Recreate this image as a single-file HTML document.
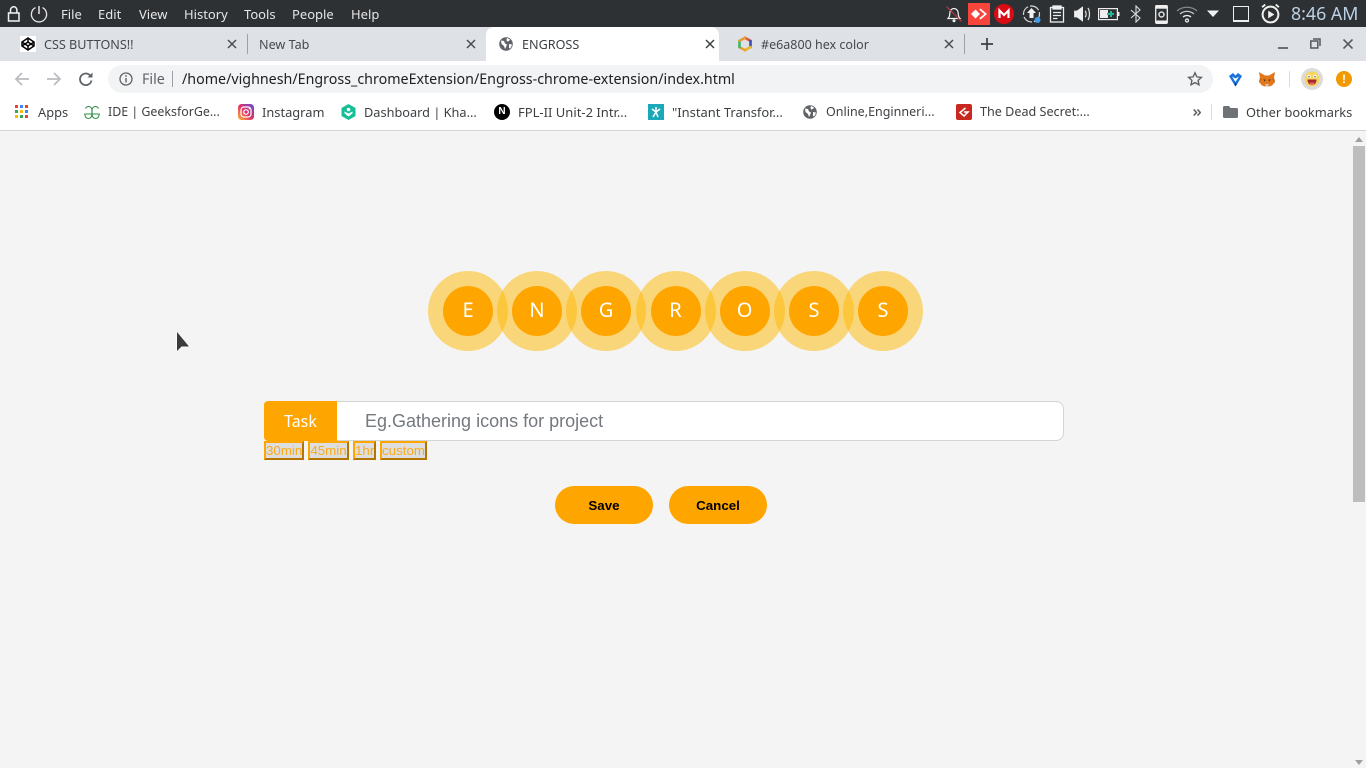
<!DOCTYPE html>
<html><head><meta charset="utf-8"><title>ENGROSS</title>
<style>
html,body{margin:0;padding:0;width:1366px;height:768px;overflow:hidden;background:#f4f4f4}
body{position:relative;font-family:"Noto Sans","Noto Sans CJK SC","DejaVu Sans",sans-serif}
.a,.t,svg.i{position:absolute}
.t{white-space:nowrap;line-height:18px}
.m{color:#e6e6e6;font-size:13px;top:5px}
.tb{color:#45494d;font-size:12.6px;top:36px}
.bm{color:#3c4043;font-size:12.85px;top:103px}
.o{position:absolute;top:271px;width:80px;height:80px;border-radius:50%;background:rgba(255,184,0,.5)}
.c{position:absolute;top:286px;width:50px;height:50px;border-radius:50%;background:#ffa500;color:#fff;font-size:20px;line-height:48px;text-align:center}
.s{position:absolute;top:441px;height:19px;box-sizing:border-box;border:2px solid;border-color:#ffa500 #b37400 #b37400 #ffa500;background:#dedede;color:#f9ab1c;font:13.33px/15px "Liberation Sans",sans-serif;text-align:center;overflow:hidden;white-space:nowrap}
.b{position:absolute;top:486px;width:98px;height:38px;border-radius:19px;background:#ffa500;color:#000;font:bold 13.33px/40px "Liberation Sans",sans-serif;text-align:center}
</style></head><body>

<div class="a" style="left:0;top:0;width:1366px;height:27px;background:#2e3134"></div>
<div class="a" style="left:0;top:27px;width:1366px;height:34px;background:#dee1e6"></div>
<div class="a" style="left:0;top:61px;width:1366px;height:69px;background:#fff"></div>
<div class="a" style="left:0;top:130px;width:1366px;height:1px;background:#d4d4d4"></div>

<!-- system bar left -->
<svg class="i" style="left:6px;top:5px" width="16" height="18" viewBox="0 0 16 18" fill="none" stroke="#f2f2f2" stroke-width="1.5"><rect x="2.5" y="8" width="10.5" height="8"/><path d="M4.5 8V5a3.2 3.2 0 0 1 6.4 0v3"/></svg>
<svg class="i" style="left:30px;top:5px" width="18" height="18" viewBox="0 0 18 18" fill="none" stroke="#e6e6e6" stroke-width="1.3"><path d="M5.5 2.6a7.6 7.6 0 1 0 7 0"/><path d="M9 1v8" stroke-width="1.5"/></svg>
<div class="t m" style="left:61px">File</div>
<div class="t m" style="left:98px">Edit</div>
<div class="t m" style="left:139px">View</div>
<div class="t m" style="left:184px">History</div>
<div class="t m" style="left:244px">Tools</div>
<div class="t m" style="left:292px">People</div>
<div class="t m" style="left:351px">Help</div>

<!-- tray -->
<svg class="i" style="left:945px;top:5px" width="18" height="18" viewBox="0 0 18 18" fill="none"><path d="M3 13.5c1.5-1.500 1.800-3 1.800-5.500 0-2.500 2-4.500 4.200-4.500s4.200 2 4.200 4.500c0 2.500.3 4 1.800 5.500z" stroke="#f2f2f2" stroke-width="1.2"/><circle cx="9" cy="15.7" r="1.5" fill="#f2f2f2"/><path d="M1.500 1.500l15 15" stroke="#b8384a" stroke-width="1.2"/></svg>
<div class="a" style="left:968px;top:3px;width:22px;height:22px;background:#f8453c"></div>
<svg class="i" style="left:968px;top:3px" width="22" height="22" viewBox="0 0 22 22" fill="#fff"><path d="M7.500 6.500l4.500 4.500-4.500 4.500L3 11z"/><path d="M12.500 5.500l6.500 5.500-6.500 5.500-1.200-1.200 5-4.300-5-4.300z"/></svg>
<div class="a" style="left:994px;top:4px;width:20px;height:20px;border-radius:50%;background:#d90b14"></div>
<svg class="i" style="left:994px;top:4px" width="20" height="20" viewBox="0 0 20 20" fill="none" stroke="#fff" stroke-width="2.2"><path d="M5.500 14V6.500l4.500 4.500 4.500-4.500V14"/></svg>
<svg class="i" style="left:1022px;top:4px" width="20" height="20" viewBox="0 0 20 20" fill="none"><circle cx="9.5" cy="10" r="8" stroke="#d8d8d8" stroke-width="1.2" stroke-dasharray="10 2"/><path d="M9.500 4l4.500 5h-2.500v5h-4V9H5z" fill="#f2f2f2"/><circle cx="15.500" cy="16" r="3" fill="#3d9be9"/></svg>
<svg class="i" style="left:1049px;top:5px" width="16" height="18" viewBox="0 0 16 18" fill="none" stroke="#eee" stroke-width="1.3"><rect x="1.500" y="2.500" width="13" height="14.500"/><rect x="4" y="1" width="8" height="3" fill="#eee"/><path d="M4 7.500h8M4 10.500h8M4 13.500h4.500"/></svg>
<svg class="i" style="left:1073px;top:4px" width="20" height="20" viewBox="0 0 18 18" fill="none"><path d="M1 6h2.500L9 2v14l-5.500-4H1z" fill="#eee"/><path d="M11 6c1 1.800 1 4.200 0 6M13.500 3.500c1.800 3.200 1.800 7.800 0 11" stroke="#ddd" stroke-width="1.1"/></svg>
<svg class="i" style="left:1098px;top:7px" width="22" height="14" viewBox="0 0 22 14"><rect x=".6" y="1.600" width="18.800" height="11" fill="none" stroke="#eee" stroke-width="1.2"/><rect x="2" y="3" width="8" height="8" fill="#eee"/><rect x="20" y="5" width="1.500" height="4" fill="#eee"/><path d="M9 6h3V4h2v2h2v2h-2v2h-2V8H9z" fill="#26b895"/></svg>
<svg class="i" style="left:1129px;top:5px" width="14" height="18" viewBox="0 0 14 18" fill="none" stroke="#ddd" stroke-width="1.1"><path d="M2 5l9 8-4 4V1l4 4-9 8"/></svg>
<svg class="i" style="left:1155px;top:5px" width="13" height="19" viewBox="0 0 13 19"><rect x=".7" y=".7" width="11.600" height="17.600" rx="1" fill="none" stroke="#eee" stroke-width="1.3"/><rect x=".7" y=".7" width="11.600" height="3" fill="#eee"/><rect x=".7" y="15.500" width="11.600" height="3" fill="#eee"/><circle cx="6.500" cy="9.500" r="2.500" fill="none" stroke="#ddd" stroke-width="1.5"/></svg>
<svg class="i" style="left:1176px;top:5px" width="22" height="18" viewBox="0 0 22 18" fill="none" stroke="#c8c8c8" stroke-width="1.2"><path d="M1 6c5.500-5 14.500-5 20 0" stroke="#888"/><path d="M4 9c4-3.500 10-3.500 14 0"/><path d="M7 12c2.300-2 5.700-2 8 0" stroke="#eee"/><circle cx="11" cy="15.500" r="1.500" stroke="#eee"/></svg>
<svg class="i" style="left:1206px;top:9px" width="14" height="9" viewBox="0 0 14 9"><path d="M1 1.500h12L7 8z" fill="#f2f2f2"/></svg>
<div class="a" style="left:1233px;top:6px;width:14px;height:13px;border:1.500px solid #eee;border-bottom-width:2px"></div>
<svg class="i" style="left:1260px;top:3px" width="21" height="21" viewBox="0 0 20 20" fill="none" stroke="#f0f0f0"><circle cx="10" cy="11" r="7.500" stroke-width="1.9"/><path d="M7.800 7.300v7.400l5.900-3.700z" fill="#f0f0f0" stroke="none"/><path d="M2 4l3-2.500M18 4l-3-2.500" stroke-width="1.8"/></svg>
<div class="t" style="left:1291px;top:3px;font-size:17.8px;line-height:22px;color:#bcd0e4">8:46 AM</div>

<!-- tabs -->
<div class="a" style="left:486px;top:27px;width:233px;height:34px;background:#fff;border-radius:8px 8px 0 0"></div>
<div class="a" style="left:20px;top:36px;width:16px;height:16px;background:#fff"></div>
<svg class="i" style="left:20px;top:36px" width="16" height="16" viewBox="0 0 16 16" fill="none" stroke="#000" stroke-width="1.5"><path d="M8 2l6 4v4l-6 4-6-4V6z"/><path d="M8 2v4M8 10v4M2 6l6 4 6-4M2 10l6-4 6 4"/></svg>
<div class="t tb" style="left:44px">CSS BUTTONS!!</div>
<svg class="i" style="left:227px;top:39px" width="10" height="10" viewBox="0 0 10 10" stroke="#4a4d51" stroke-width="1.5"><path d="M1 1l8 8M9 1l-8 8"/></svg>
<div class="a" style="left:247px;top:34px;width:1px;height:20px;background:#9da1a6"></div>
<div class="t tb" style="left:259px">New Tab</div>
<svg class="i" style="left:466px;top:39px" width="10" height="10" viewBox="0 0 10 10" stroke="#4a4d51" stroke-width="1.5"><path d="M1 1l8 8M9 1l-8 8"/></svg>
<svg class="i" style="left:499px;top:37px" width="14" height="14" viewBox="0 0 14 14"><circle cx="7" cy="7" r="6.800" fill="#5f6368"/><path d="M2 3.500l3 .5 1 2.500 2 1-1 2.500-1 2-1-3-2.500-2zM8 1l3 1.500-1 1.500-2 .5-.5-2zM10 7l3 .5-1 3-2 1z" fill="#fff"/></svg>
<div class="t tb" style="left:522px;color:#3c4043">ENGROSS</div>
<svg class="i" style="left:705px;top:39px" width="10" height="10" viewBox="0 0 10 10" stroke="#3c4043" stroke-width="1.5"><path d="M1 1l8 8M9 1l-8 8"/></svg>
<svg class="i" style="left:737px;top:36px" width="16" height="16" viewBox="0 0 16 16" fill="none" stroke-width="2.6" stroke-linecap="round"><path d="M8 1.800l5.500 3.100" stroke="#e0583e"/><path d="M13.500 4.900v6.200" stroke="#3a4fb5"/><path d="M13.500 11.100L8 14.200" stroke="#e8b82c"/><path d="M8 14.200l-5.500-3.100" stroke="#f0a030"/><path d="M2.500 11.100V4.900" stroke="#3fb56a"/><path d="M2.500 4.900L8 1.800" stroke="#e0a030"/></svg>
<div class="t tb" style="left:761px;font-size:12.5px">#e6a800 hex color</div>
<svg class="i" style="left:944px;top:39px" width="10" height="10" viewBox="0 0 10 10" stroke="#4a4d51" stroke-width="1.5"><path d="M1 1l8 8M9 1l-8 8"/></svg>
<div class="a" style="left:964px;top:34px;width:1px;height:20px;background:#9da1a6"></div>
<svg class="i" style="left:981px;top:38px" width="12" height="12" viewBox="0 0 12 12" stroke="#3c4043" stroke-width="1.7"><path d="M6 0v12M0 6h12"/></svg>
<div class="a" style="left:1278px;top:47px;width:10px;height:2px;background:#6b6f73"></div>
<svg class="i" style="left:1310px;top:38px" width="11" height="11" viewBox="0 0 11 11" fill="none" stroke="#55595d" stroke-width="1.5"><rect x=".8" y="3" width="7" height="7"/><path d="M3 1h7v7"/></svg>
<svg class="i" style="left:1343px;top:39px" width="10" height="10" viewBox="0 0 10 10" stroke="#55595d" stroke-width="1.6"><path d="M.5.500l9 9M9.500.500l-9 9"/></svg>

<!-- toolbar -->
<svg class="i" style="left:14px;top:71px" width="16" height="16" viewBox="0 0 16 16" fill="none" stroke="#b9bcc0" stroke-width="1.7"><path d="M15 8H2M8 2L2 8l6 6"/></svg>
<svg class="i" style="left:46px;top:71px" width="16" height="16" viewBox="0 0 16 16" fill="none" stroke="#b9bcc0" stroke-width="1.7"><path d="M1 8h13M8 2l6 6-6 6"/></svg>
<svg class="i" style="left:78px;top:71px" width="16" height="16" viewBox="0 0 16 16" fill="none" stroke="#5f6368" stroke-width="1.8"><path d="M13.500 9.500a5.800 5.800 0 1 1-1.300-5"/><path d="M14.500 1.500v5h-5z" fill="#5f6368" stroke="none"/></svg>
<div class="a" style="left:108px;top:65px;width:1105px;height:28px;border-radius:14px;background:#f1f3f4"></div>
<svg class="i" style="left:119px;top:72px" width="14" height="14" viewBox="0 0 14 14" fill="none"><circle cx="7" cy="7" r="6" stroke="#5f6368" stroke-width="1.3"/><path d="M7 6v4.500" stroke="#5f6368" stroke-width="1.4"/><circle cx="7" cy="4" r=".9" fill="#5f6368"/></svg>
<div class="t" style="left:142px;top:71px;font-size:14.25px;color:#5f6368">File</div>
<div class="a" style="left:172px;top:71px;width:1px;height:16px;background:#9aa0a6"></div>
<div class="t" style="left:182px;top:71px;font-size:14.25px;color:#202124">/home/vighnesh/Engross_chromeExtension/Engross-chrome-extension/index.html</div>
<svg class="i" style="left:1187px;top:71px" width="16" height="16" viewBox="0 0 16 16" fill="none" stroke="#5f6368" stroke-width="1.4"><path d="M8 1.800l1.900 4.100 4.500.5-3.300 3 .9 4.400L8 11.600 4 13.800l.9-4.400-3.300-3 4.500-.5z"/></svg>
<svg class="i" style="left:1227px;top:71px" width="17" height="17" viewBox="0 0 17 17"><path d="M2 5l4-3 2.500 2.500L11 2l4 3-6 10H8z" fill="#1a73d9"/><path d="M5 5.500l3.500 5.500L12 5.500 8.500 7.500z" fill="#fff"/><path d="M7.300 12.500l1.200 3 1.200-3z" fill="#12305c"/></svg>
<svg class="i" style="left:1258px;top:71px" width="18" height="17" viewBox="0 0 18 17"><path d="M1 1l6 3.500h4L17 1l-1 6 1 4-3 3.500-3 1H7l-3-1L1 11l1-4z" fill="#e2761b"/><path d="M5.500 8l2 1-1 1.500zM12.500 8l-2 1 1 1.500z" fill="#33261a"/><path d="M7 13h4l-1 2.500H8z" fill="#d7c1b3"/><path d="M1 11l3-3-2-1zM17 11l-3-3 2-1z" fill="#c0621a"/></svg>
<div class="a" style="left:1289px;top:71px;width:1px;height:16px;background:#dadce0"></div>
<div class="a" style="left:1301px;top:68px;width:22px;height:22px;border-radius:50%;background:#dcdcdc"></div>
<svg class="i" style="left:1304px;top:71px" width="16" height="16" viewBox="0 0 16 16"><circle cx="8" cy="8" r="7.500" fill="#f7d65a"/><circle cx="5" cy="5.500" r="1.700" fill="#fff"/><circle cx="11" cy="5.500" r="1.700" fill="#fff"/><circle cx="5" cy="5.800" r=".7" fill="#333"/><circle cx="11" cy="5.800" r=".7" fill="#333"/><path d="M3.500 8.500h9C12.500 12 10.500 14 8 14s-4.500-2-4.500-5.500z" fill="#a32a2a"/><path d="M5.500 11.500h5L9.500 14h-3z" fill="#e8696b"/></svg>
<div class="a" style="left:1336px;top:71px;width:16px;height:16px;border-radius:50%;background:#f29900;color:#fff;font:bold 12px/16px 'Liberation Sans',sans-serif;text-align:center">!</div>

<!-- bookmarks -->
<svg class="i" style="left:15px;top:105px" width="13" height="13" viewBox="0 0 13 13"><rect x="0" y="0" width="3" height="3" fill="#ea4335"/><rect x="5" y="0" width="3" height="3" fill="#4285f4"/><rect x="10" y="0" width="3" height="3" fill="#ea4335"/><rect x="0" y="5" width="3" height="3" fill="#34a853"/><rect x="5" y="5" width="3" height="3" fill="#fbbc04"/><rect x="10" y="5" width="3" height="3" fill="#4285f4"/><rect x="0" y="10" width="3" height="3" fill="#fbbc04"/><rect x="5" y="10" width="3" height="3" fill="#34a853"/><rect x="10" y="10" width="3" height="3" fill="#ea4335"/></svg>
<div class="t bm" style="left:38px">Apps</div>
<svg class="i" style="left:84px;top:105px" width="16" height="15" viewBox="0 0 16 15" fill="none" stroke="#2f8d46" stroke-width="1.1"><path d="M8 9h7.200c0 3-1.700 4.500-3.700 4.500S8 11.500 8 9V5.500C8 3 9.500 1.500 11.500 1.500c1.500 0 2.500.7 3 2"/><path d="M8 9H.8c0 3 1.700 4.500 3.700 4.500S8 11.500 8 9V5.500C8 3 6.500 1.500 4.500 1.500c-1.500 0-2.500.7-3 2"/></svg>
<div class="t bm" style="left:108px;font-size:12.4px">IDE | GeeksforGe...</div>
<svg class="i" style="left:238px;top:104px" width="16" height="16" viewBox="0 0 16 16"><defs><linearGradient id="ig" x1="0" y1="1" x2="1" y2="0"><stop offset="0" stop-color="#fdb933"/><stop offset=".5" stop-color="#e1306c"/><stop offset="1" stop-color="#5b51d8"/></linearGradient></defs><rect width="16" height="16" rx="3.500" fill="url(#ig)"/><rect x="3" y="3" width="10" height="10" rx="3" fill="none" stroke="#fff" stroke-width="1.2"/><circle cx="8" cy="8" r="2.300" fill="none" stroke="#fff" stroke-width="1.2"/><circle cx="11.200" cy="4.800" r=".7" fill="#fff"/></svg>
<div class="t bm" style="left:262px">Instagram</div>
<svg class="i" style="left:341px;top:104px" width="15" height="16" viewBox="0 0 15 16"><path d="M7.500 0l7 4v8l-7 4-7-4V4z" fill="#14bf96"/><circle cx="7.500" cy="5.500" r="1.800" fill="#fff"/><path d="M3.500 7.500l4 2 4-2v2l-4 3-4-3z" fill="#fff"/></svg>
<div class="t bm" style="left:364px;font-size:12.75px">Dashboard | Kha...</div>
<div class="a" style="left:494px;top:104px;width:16px;height:16px;border-radius:50%;background:#000;color:#fff;font:bold 10px/16px 'Liberation Sans',sans-serif;text-align:center">N</div>
<div class="t bm" style="left:518px;font-size:13px">FPL-II Unit-2 Intr...</div>
<div class="a" style="left:648px;top:104px;width:16px;height:16px;background:#1ba8b8"></div>
<svg class="i" style="left:648px;top:104px" width="16" height="16" viewBox="0 0 16 16" stroke="#fff" stroke-width="1.5" fill="none"><path d="M8 3v5M4 5l4 3 4-3M8 8l-3 5M8 8l2 5"/></svg>
<div class="t bm" style="left:672px;font-size:12.95px">"Instant Transfor...</div>
<svg class="i" style="left:803px;top:105px" width="14" height="14" viewBox="0 0 14 14"><circle cx="7" cy="7" r="6.800" fill="#5f6368"/><path d="M2 3.500l3 .5 1 2.500 2 1-1 2.500-1 2-1-3-2.500-2zM8 1l3 1.500-1 1.500-2 .5-.5-2zM10 7l3 .5-1 3-2 1z" fill="#fff"/></svg>
<div class="t bm" style="left:826px;font-size:12.5px">Online,Enginneri...</div>
<div class="a" style="left:956px;top:104px;width:16px;height:16px;border-radius:2px;background:#c8281f"></div>
<svg class="i" style="left:956px;top:104px" width="16" height="16" viewBox="0 0 16 16" fill="none" stroke="#fff" stroke-width="1.5"><path d="M9.500 4L4 8.500 8 12l4-4H8"/></svg>
<div class="t bm" style="left:980px;font-size:12.6px">The Dead Secret:...</div>
<svg class="i" style="left:1193px;top:109px" width="8" height="7" viewBox="0 0 8 7" fill="none" stroke="#5f6368" stroke-width="1.6"><path d="M.7.500L3.500 3.500.7 6.500M4.500.500L7.300 3.500 4.500 6.500"/></svg>
<div class="a" style="left:1211px;top:104px;width:1px;height:16px;background:#dadce0"></div>
<svg class="i" style="left:1223px;top:106px" width="15" height="12" viewBox="0 0 15 12"><path d="M0 1.500A1.500 1.500 0 0 1 1.500 0H6l1.500 2h6A1.500 1.500 0 0 1 15 3.500v7a1.500 1.500 0 0 1-1.500 1.500h-12A1.500 1.500 0 0 1 0 10.500z" fill="#6e7276"/></svg>
<div class="t bm" style="left:1246px">Other bookmarks</div>

<!-- scrollbar -->
<div class="a" style="left:1352px;top:131px;width:14px;height:637px;background:#f4f4f4"></div>
<svg class="i" style="left:1355px;top:137px" width="8" height="5" viewBox="0 0 8 5"><path d="M4 0l4 5H0z" fill="#a0a0a0"/></svg>
<div class="a" style="left:1353px;top:146px;width:12px;height:356px;background:#bdbdbd"></div>
<svg class="i" style="left:1355px;top:760px" width="8" height="5" viewBox="0 0 8 5"><path d="M4 5L0 0h8z" fill="#a0a0a0"/></svg>

<!-- logo -->
<div class="o" style="left:428px"></div><div class="o" style="left:497px"></div><div class="o" style="left:566px"></div><div class="o" style="left:635.5px"></div><div class="o" style="left:704.5px"></div><div class="o" style="left:773.5px"></div><div class="o" style="left:843px"></div>
<div class="c" style="left:443px">E</div><div class="c" style="left:512px">N</div><div class="c" style="left:581px">G</div><div class="c" style="left:650.5px">R</div><div class="c" style="left:719.5px">O</div><div class="c" style="left:789px">S</div><div class="c" style="left:858px">S</div>

<!-- form -->
<div class="a" style="left:337px;top:401px;width:727px;height:40px;box-sizing:border-box;background:#fff;border:1px solid #d2d5d8;border-left:0;border-radius:0 8px 8px 0"></div>
<div class="a" style="left:264px;top:401px;width:73px;height:40px;background:#ffa500;border-radius:4px 0 0 4px;color:#fff;font-size:16px;line-height:41px;text-align:center">Task</div>
<div class="t" style="left:365px;top:410px;font:18px/22px 'Liberation Sans',sans-serif;color:#73797f">Eg.Gathering icons for project</div>
<div class="s" style="left:264px;width:40px">30min</div>
<div class="s" style="left:308px;width:41px">45min</div>
<div class="s" style="left:353px;width:23px">1hr</div>
<div class="s" style="left:380px;width:47px">custom</div>
<div class="b" style="left:555px">Save</div>
<div class="b" style="left:669px">Cancel</div>

<!-- cursor -->
<svg class="i" style="left:172px;top:327px" width="22" height="30" viewBox="0 0 22 30"><path d="M4 4v21l5-5 1 .5h9z" fill="#fff" opacity=".6"/><path d="M5 5v19l4.500-4.500h7.500z" fill="#3b3b3b"/></svg>
</body></html>
